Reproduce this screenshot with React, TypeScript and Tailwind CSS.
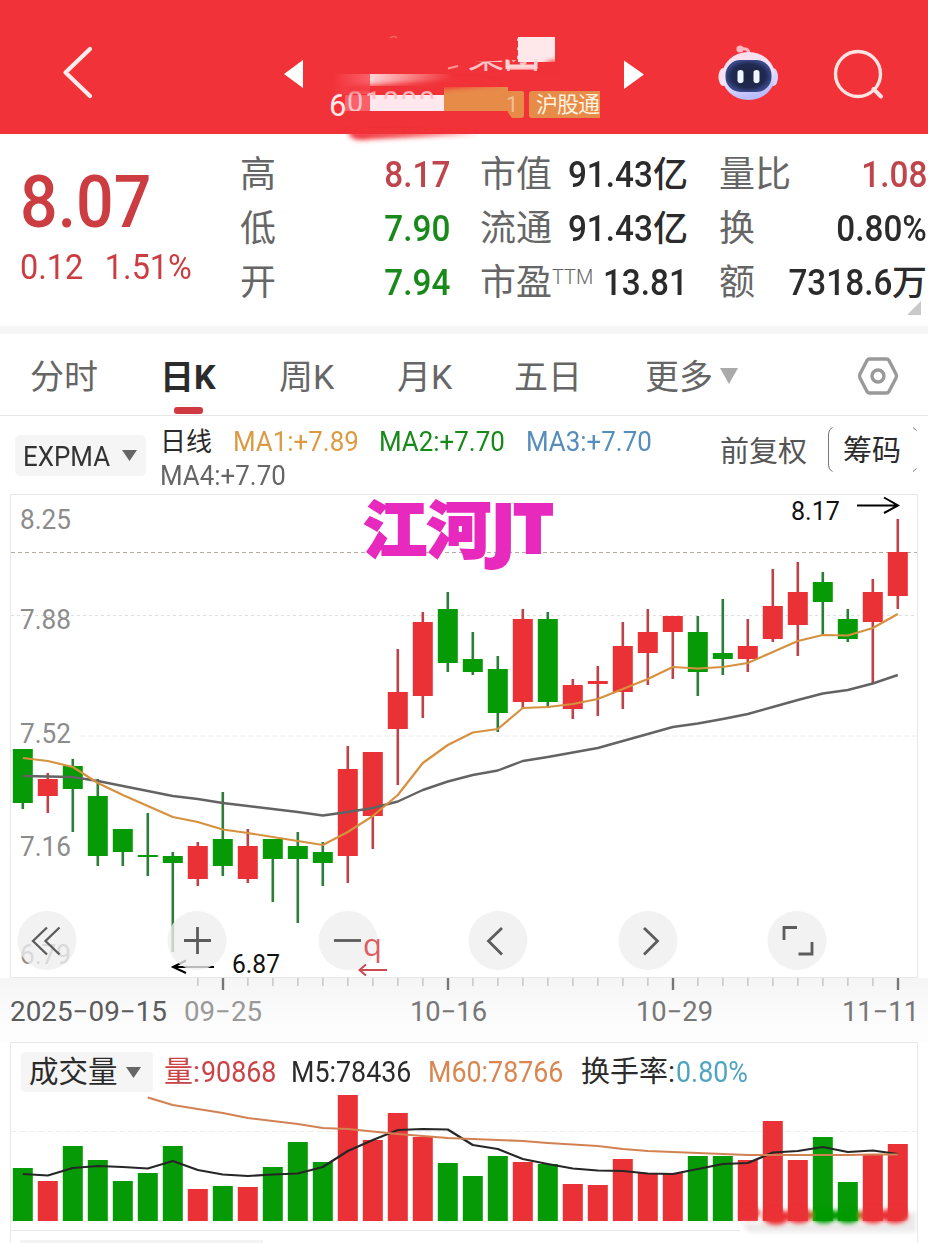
import React from "react";

type Candle = [up: 0 | 1, top: number, bottom: number, high: number, low: number];

const candles: Candle[] = [
  [0, 749, 803, 749, 809], [1, 779, 796, 773, 813], [0, 766, 789, 759, 832], [0, 796, 856, 779, 866],
  [0, 829, 852, 829, 866], [0, 855, 857, 813, 876], [0, 856, 863, 852, 952], [1, 846, 879, 842, 886],
  [0, 839, 866, 792, 876], [1, 846, 879, 829, 883], [0, 839, 859, 839, 902], [0, 846, 859, 832, 923],
  [0, 852, 863, 842, 886], [1, 769, 856, 746, 883], [1, 752, 816, 752, 849], [1, 692, 729, 649, 785],
  [1, 622, 696, 612, 718], [0, 609, 663, 592, 672], [0, 659, 672, 632, 675], [0, 669, 713, 656, 732],
  [1, 619, 702, 609, 708], [0, 619, 702, 612, 708], [1, 685, 709, 679, 719], [1, 681, 684, 666, 716],
  [1, 646, 692, 622, 709], [1, 632, 653, 609, 685], [1, 616, 632, 616, 679], [0, 632, 672, 616, 696],
  [0, 653, 659, 599, 675], [1, 646, 659, 619, 672], [1, 606, 639, 569, 642], [1, 592, 625, 562, 656],
  [0, 582, 602, 572, 635], [0, 619, 639, 609, 642], [1, 592, 622, 579, 684], [1, 552, 596, 519, 609],
];

const fastLine = [
  758, 761, 767, 783, 795, 806, 817, 822, 829.5, 833, 837, 841, 845, 832, 816, 795, 763, 745, 732.5, 729, 708, 707,
  704, 699, 689, 679, 667, 668.5, 667, 663, 652, 641, 635, 635.5, 628, 614,
];
const slowLine = [
  776, 776.5, 777, 781, 786, 791, 796, 799, 803, 806, 809, 812, 815.5, 812, 808, 801.5, 790, 781.5, 775, 770.5, 761,
  757, 752.5, 748, 741, 734, 727, 723.5, 719, 714, 707, 700, 693.5, 690, 683.5, 675,
];
const volumeTops = [
  1168, 1181, 1146, 1160, 1181, 1173, 1146, 1189, 1186, 1187, 1167, 1142, 1162, 1095, 1140, 1113, 1137, 1163, 1176,
  1156, 1162, 1164, 1184, 1185, 1159, 1173, 1173, 1156, 1156, 1160, 1121, 1160, 1137, 1182, 1155, 1144,
];
const m5 = [
  1174, 1175.5, 1168, 1166, 1167, 1168.5, 1161, 1170, 1174.5, 1176, 1174.5, 1173.5, 1167, 1151, 1140, 1130, 1129,
  1129.5, 1145, 1149, 1159, 1164, 1168.5, 1170.5, 1171, 1173.5, 1174, 1169, 1164, 1163, 1152.5, 1151, 1147, 1152,
  1150.5, 1154,
];
const m60 = [
  1097.5, 1105, 1109, 1113, 1118, 1121, 1124, 1128, 1129, 1131.5, 1134, 1136, 1138, 1139, 1140, 1141, 1143, 1144.5,
  1146, 1149, 1151, 1152, 1153, 1154, 1155, 1155, 1155, 1155, 1155, 1154.5, 1154.5,
];

const RED = "#ea3135";
const GREEN = "#069a06";
const cx = (i: number) => 22.8 + i * 25;
const points = (ys: number[], from = 0) => ys.map((y, i) => `${cx(i + from)},${y}`).join(" ");

function Header() {
  return (
    <header className="h-[134px] w-full bg-[#f13238]">
      <svg width="928" height="150" viewBox="0 0 928 150" className="relative block">
        <defs>
          <filter id="soft" x="-20%" y="-60%" width="140%" height="220%">
            <feGaussianBlur stdDeviation="2.5" />
          </filter>
          <linearGradient id="fadeR" x1="0" x2="1" y1="0" y2="0">
            <stop offset="0" stopColor="#ffd5d6" />
            <stop offset="1" stopColor="#f13238" />
          </linearGradient>
          <linearGradient id="fadeL" x1="0" x2="1" y1="0" y2="0">
            <stop offset="0" stopColor="#f13238" />
            <stop offset="1" stopColor="#fa6069" />
          </linearGradient>
          <linearGradient id="shell" x1="0" x2="0.3" y1="0" y2="1">
            <stop offset="0" stopColor="#ffdce6" />
            <stop offset="0.6" stopColor="#ece5ff" />
            <stop offset="1" stopColor="#b9bcff" />
          </linearGradient>
          <radialGradient id="visor">
            <stop offset="0" stopColor="#1d2442" />
            <stop offset="0.75" stopColor="#202a50" />
            <stop offset="1" stopColor="#3a4787" />
          </radialGradient>
        </defs>
        <path d="M348 131 C350 140 358 141 372 139 L480 133 Z" fill="#f13238" filter="url(#soft)" />
        <path d="M90 49 L65.500 72.500 L90 96" fill="none" stroke="#ffeceb" strokeWidth="4.200" strokeLinecap="round" strokeLinejoin="round" />
        <path d="M303 60 V88 L284 74 Z M624 60.500 V89 L644 74.500 Z" fill="#fff" />
        <path d="M390 38 q4 -3 7 0" fill="none" stroke="#f8676c" strokeWidth="1.500" />
        <text x="468" y="68" fontSize="36" fill="#ffc4c6" className="font-['Noto_Sans_CJK_SC',sans-serif]">集团</text>
        <path d="M448 68.500 l10 -2.500" stroke="#f99699" strokeWidth="2" />
        <path d="M455 28 H517 V60 L455 63 Z" fill="#f13238" />
        <rect x="518" y="37" width="37" height="25" fill="#ffe8ea" />
        <path d="M507 59.500 V69 M507 66 H536 M536 59 V69" fill="none" stroke="#ffd6d8" strokeWidth="3" />
        <path d="M541 67 Q548 60 558 60 V69 H541Z" fill="#f13238" filter="url(#soft)" />
        <rect x="333" y="74" width="37" height="20" fill="url(#fadeL)" />
        <rect x="370" y="74" width="82" height="12" fill="url(#fadeR)" />
        <rect x="345" y="95" width="25" height="16" fill="#fa6069" />
        <rect x="370" y="95" width="74" height="16" fill="#ffe8ed" />
        <text x="329" y="116" fontSize="31" fill="#ffe8e8" className="font-[Roboto,sans-serif]">6</text>
        <text x="347" y="112" fontSize="29" fill="#fcc4c8" textLength="88" className="font-[Roboto,sans-serif]">01000</text>
        <rect x="372" y="99" width="72" height="12" fill="#ffe8ed" />
        <rect x="444" y="87" width="64" height="24" fill="#e78b49" />
        <path d="M500 91 H522 Q524 91 524 93 V115 Q524 118 521 118 H512 L506 110 Z" fill="#e78b49" />
        <text x="506" y="112" fontSize="22" fill="#f4bd92" className="font-[Roboto,sans-serif]">1</text>
        <path d="M340 87 Q365 86 445 80 Q490 78 500 84 Q460 88 442 89 Q400 89 350 92 Z" fill="#f13238" filter="url(#soft)" />
        <rect x="346" y="111" width="162" height="13" fill="#f13238" />
        <path d="M529 94 Q529 91 532 91 H600 V118 H532 Q529 118 529 115 Z" fill="#e78b49" />
        <text x="536" y="112" fontSize="22" textLength="64" fill="#fff2df" className="font-['Noto_Sans_CJK_SC',sans-serif]">沪股通</text>
        <circle cx="740" cy="49" r="3.600" fill="#ffb9c3" />
        <path d="M740 49 Q750 47 749 56" fill="none" stroke="#ffb9c3" strokeWidth="3" />
        <ellipse cx="723" cy="77" rx="4.500" ry="9" fill="#ffe2ee" />
        <ellipse cx="773.500" cy="77" rx="4.500" ry="9" fill="#d8d3ff" />
        <ellipse cx="748.500" cy="76" rx="26.500" ry="24" fill="url(#shell)" />
        <rect x="725.500" y="60" width="46" height="32" rx="15" fill="url(#visor)" />
        <rect x="737.500" y="70" width="6" height="13" rx="2.800" fill="#f0f6ff" />
        <rect x="753.500" y="70" width="6" height="13" rx="2.800" fill="#f0f6ff" />
        <circle cx="858" cy="74" r="22.500" fill="none" stroke="#ffe4e2" strokeWidth="3.400" />
        <path d="M873.500 89 L881 96.500" stroke="#ffe4e2" strokeWidth="4" strokeLinecap="round" />
      </svg>
    </header>
  );
}

function Num({ children, right = false }: { children: string; right?: boolean }) {
  return <span className={right ? "inline-block origin-right scale-x-[0.925]" : "inline-block origin-left scale-x-[0.925]"}>{children}</span>;
}

interface StatProps {
  label: React.ReactNode;
  value: string;
  unit?: string;
  tone?: string;
}

function Stat({ label, value, unit, tone = "text-[#2b2b2b]" }: StatProps) {
  return (
    <div className="flex h-[54px] items-center justify-between whitespace-nowrap">
      <span className="text-[36px] text-[#666]">{label}</span>
      <span className={"text-[36px] font-medium " + tone}>
        <Num right>{value}</Num>
        {unit && <span className="text-[35px]">{unit}</span>}
      </span>
    </div>
  );
}

function Quote() {
  return (
    <section className="flex h-[192px] pt-[14px] leading-none">
      <div className="w-[240px] pl-[20px] pt-[18px] text-[#cb3d41]">
        <div className="origin-left scale-x-[0.92] text-[72px] font-medium leading-[74px]">8.07</div>
        <div className="flex origin-left scale-x-[0.94] gap-[23px] pt-[3px] text-[34.500px] leading-[48px]">
          <span>0.12</span>
          <span>1.51%</span>
        </div>
      </div>
      <div className="w-[210px]">
        <Stat label="高" value="8.17" tone="text-[#c0444b]" />
        <Stat label="低" value="7.90" tone="text-[#18891a]" />
        <Stat label="开" value="7.94" tone="text-[#18891a]" />
      </div>
      <div className="ml-[30px] w-[208px]">
        <Stat label="市值" value="91.43" unit="亿" />
        <Stat label="流通" value="91.43" unit="亿" />
        <Stat label={<>市盈<span className="relative top-[-11px] text-[20px] font-light">TTM</span></>} value="13.81" />
      </div>
      <div className="relative ml-[31px] w-[208px]">
        <Stat label="量比" value="1.08" tone="text-[#c0444b]" />
        <Stat label="换" value="0.80%" />
        <Stat label="额" value="7318.6" unit="万" />
        <svg width="14" height="14" className="absolute bottom-[11px] right-[6px]">
          <path d="M14 0 V14 H0 Z" fill="#c9c9c9" />
        </svg>
      </div>
    </section>
  );
}

function Tabs() {
  const tab = "block whitespace-nowrap";
  return (
    <nav className="flex h-[82px] items-center border-b border-[#e6e6e6] pt-[4px] text-[34px] leading-none text-[#666]">
      <span className={tab + " w-[130px] pl-[30px]"}>分时</span>
      <div className="relative w-[149px] pl-[30px] font-bold text-[#2b2b2b]">
        日K
        <i className="absolute bottom-[-20px] left-[44px] h-[7px] w-[29px] rounded-[3px] bg-[#cf3a42]" />
      </div>
      <span className={tab + " w-[118px]"}>周K</span>
      <span className={tab + " w-[117px]"}>月K</span>
      <span className={tab + " w-[131px]"}>五日</span>
      <span className={tab + " w-[75px]"}>更多</span>
      <svg width="18" height="16" className="mb-[1px]"><path d="M0 0 H18 L9 16 Z" fill="#aaa" /></svg>
      <svg width="42" height="40" viewBox="0 0 42 40" className="mb-[1px] ml-[119px]" fill="none" stroke="#999" strokeWidth="3.400">
        <path d="M12.500 3 H29.500 Q31 3 32 4.500 L39 18 Q40 20 39 22 L32 35.500 Q31 37 29.500 37 H12.500 Q11 37 10 35.500 L3 22 Q2 20 3 18 L10 4.500 Q11 3 12.500 3 Z" />
        <circle cx="21" cy="20" r="6" />
      </svg>
    </nav>
  );
}

function Indicators() {
  return (
    <section className="flex h-[78px] leading-none">
      <div className="ml-[15px] mt-[19px] flex h-[41px] w-[131px] items-center rounded-[5px] bg-[#f5f5f5] pl-[8px] pt-[2px] text-[28px] text-[#333]">
        <span className="w-[99px]"><Num>EXPMA</Num></span>
        <svg width="15" height="11" className="mb-[3px]"><path d="M0 0 H15 L7.500 11 Z" fill="#666" /></svg>
      </div>
      <div className="ml-[14px] flex w-[558px] flex-col pt-[8px] text-[28px]">
        <div className="flex h-[35px] items-center whitespace-nowrap">
          <span className="w-[73px] text-[26px] text-[#2b2b2b]">日线</span>
          <span className="w-[146px] text-[#dc9a45]"><Num>MA1:+7.89</Num></span>
          <span className="w-[147px] text-[#18891a]"><Num>MA2:+7.70</Num></span>
          <span className="text-[#558dbd]"><Num>MA3:+7.70</Num></span>
        </div>
        <span className="h-[34px] leading-[34px] text-[#666]"><Num>MA4:+7.70</Num></span>
      </div>
      <span className="ml-[2px] mt-[22px] w-[108px] text-[29px] text-[#555]">前复权</span>
      <span className="relative mt-[11px] flex h-[45px] w-[88px] items-center justify-center pt-[4px] text-[29px] text-[#2b2b2b]">
        筹码
        <svg width="90" height="45" className="absolute left-0 top-0" fill="none" stroke="#777">
          <path d="M4.500 0.500 Q0.500 2 0.500 7 V38 Q0.500 43 4.500 44.500 M85 0.500 L88.500 3.500 M85 44.500 L88.500 41.500" />
        </svg>
      </span>
    </section>
  );
}

interface LabelProps {
  x: number;
  y: number;
  w: number;
  size?: number;
  fill?: string;
  children: string;
}

function Label({ x, y, w, size = 27, fill = "#8c8c8c", children }: LabelProps) {
  return (
    <text x={x} y={y} fontSize={size} fill={fill} textLength={w} lengthAdjust="spacingAndGlyphs" className="font-[Roboto,sans-serif]">
      {children}
    </text>
  );
}

function PriceChart() {
  return (
    <svg width="928" height="548" viewBox="0 494 928 548" className="block shrink-0 overflow-visible">
      <defs>
        <linearGradient id="axis" x1="0" x2="0" y1="0" y2="1">
          <stop offset="0" stopColor="#f5f5f5" />
          <stop offset="0.8" stopColor="#fdfdfd" />
        </linearGradient>
      </defs>
      <rect x="0" y="978" width="928" height="64" fill="url(#axis)" />
      <rect x="10.500" y="494.500" width="907" height="483" fill="#fff" stroke="#e8e8e8" />
      <path d="M11 552.500 H917" stroke="#b5ae9f" strokeDasharray="4 3" />
      <path d="M11 615.500 H917" stroke="#dedede" strokeDasharray="3 3" />
      <path d="M80 736 H917" stroke="#ececec" strokeDasharray="6 2" />
      <Label x={20} y={528.5} w={51}>8.25</Label>
      <Label x={20} y={628.5} w={51}>7.88</Label>
      <Label x={20} y={742.5} w={51}>7.52</Label>
      <Label x={20} y={856} w={51}>7.16</Label>
      <Label x={20} y={963.5} w={51}>6.79</Label>
      {candles.map(([up, top, bottom, high, low], i) => (
        <g key={i} fill={up ? RED : GREEN}>
          <rect x={cx(i) - 1.3} y={high} width="2.600" height={low - high} fill={up ? "#bd4348" : "#2c7d38"} />
          <rect x={cx(i) - 10} y={top} width="20" height={bottom - top} />
        </g>
      ))}
      <polyline points={points(slowLine)} fill="none" stroke="#636363" strokeWidth="2.400" strokeLinejoin="round" />
      <polyline points={points(fastLine)} fill="none" stroke="#d6913f" strokeWidth="2.200" strokeLinejoin="round" />
      <g fill="#e829bd" stroke="#e829bd" strokeWidth="1.800" className="font-black">
        <text x="363" y="553" fontSize="62" textLength="128" lengthAdjust="spacingAndGlyphs" className="font-['Noto_Sans_CJK_SC',sans-serif]">江河</text>
        <text x="491" y="553" fontSize="69" className="font-['Open_Sans',sans-serif]">J</text>
        <text x="513" y="553" fontSize="69" className="font-['Open_Sans',sans-serif]">T</text>
      </g>
      <Label x={791} y={519.5} w={49} size={25} fill="#111">8.17</Label>
      <path d="M857 505.500 H898 M884 497.500 L898 505.500 L884 513" fill="none" stroke="#000" strokeWidth="2" />
      <path d="M214 967 H173 M186 960.500 L173 967 L186 973" fill="none" stroke="#000" strokeWidth="2" />
      <g fill="#eee" fillOpacity="0.78">
        {[47, 197, 348, 498, 648, 797].map((x) => <circle key={x} cx={x} cy="940.500" r="29.500" />)}
      </g>
      <g fill="none" stroke="#5c5c5c" strokeWidth="2.800">
        <path d="M47 927.500 L33 941 L47 954.500 M59.500 927.500 L45.500 941 L59.500 954.500" strokeWidth="2.300" />
        <path d="M184 940.500 H211 M197.500 927 V954" />
        <path d="M334 940.500 H361" />
        <path d="M502 928 L488.500 941 L502 954.500 M644 928 L657.500 941 L644 954.500" />
        <path d="M784 940 V927.500 H797 M798.500 954 H812 V942" />
      </g>
      <Label x={232} y={973} w={48} size={25} fill="#111">6.87</Label>
      <text x="363" y="956" fontSize="31" fill="#dc5c62" className="font-['Open_Sans',sans-serif]">q</text>
      <path d="M387 970 H360 M366 964.500 L359.500 970 L366 975.500" fill="none" stroke="#c74a51" strokeWidth="2" />
      {Array.from({ length: 29 }, (_, n) => {
        const i = n + 7;
        const major = (i - 8) % 9 === 0;
        return <rect key={i} x={cx(i) - (major ? 1 : 0.5)} y="978" width={major ? 2.4 : 1.2} height={major ? 12 : 8} fill={major ? "#777" : "#bbb"} />;
      })}
      <Label x={10} y={1021} w={157} fill="#5c5c5c">2025−09−15</Label>
      <Label x={184} y={1021} w={78} fill="#999">09−25</Label>
      <Label x={410} y={1021} w={77} fill="#777">10−16</Label>
      <Label x={636} y={1021} w={77} fill="#777">10−29</Label>
      <Label x={842} y={1021} w={77} fill="#777">11−11</Label>
    </svg>
  );
}

function Volume() {
  return (
    <section className="mx-[10px] flex h-[201px] w-[908px] flex-col border-x border-t border-[#e8e8e8] leading-none">
      <div className="flex h-[52px] items-center whitespace-nowrap pt-[6px] text-[29px] text-[#2b2b2b]">
        <div className="ml-[10px] mr-[11px] flex h-[40px] w-[132px] items-center rounded bg-[#f5f5f5] pl-[8px] pt-[2px]">
          <span className="w-[97px] text-[29.500px]">成交量</span>
          <svg width="15" height="11" className="mb-[2px]"><path d="M0 0 H15 L7.500 11 Z" fill="#666" /></svg>
        </div>
        <span className="w-[37px] text-[#cb4347]">量:</span>
        <span className="w-[90px] text-[#cb4347]"><Num>90868</Num></span>
        <span className="w-[137px]"><Num>M5:78436</Num></span>
        <span className="w-[153px] text-[#d98650]"><Num>M60:78766</Num></span>
        <span className="w-[95px]">换手率:</span>
        <span className="text-[#4ea5bf]"><Num>0.80%</Num></span>
      </div>
      <svg width="906" height="148" viewBox="11 1095 906 148" className="block shrink-0">
        <defs>
          <filter id="smear" x="-10%" y="-80%" width="120%" height="260%">
            <feGaussianBlur stdDeviation="2" />
          </filter>
        </defs>
        <path d="M11 1131.500 H917" stroke="#eee" strokeDasharray="6 3" />
        {volumeTops.map((y, i) => (
          <rect key={i} x={cx(i) - 10} y={y} width="20" height={1221 - y} fill={candles[i][0] ? RED : GREEN} />
        ))}
        <polyline points={points(m5)} fill="none" stroke="#262626" strokeWidth="2.200" strokeLinejoin="round" />
        <polyline points={points(m60, 5)} fill="none" stroke="#d28252" strokeWidth="2.200" strokeLinejoin="round" />
        <path d="M11 1230.500 H740" stroke="#e8e8e8" />
        <rect x="20" y="1240" width="243" height="4" fill="#f3f3f3" />
        <path d="M742 1223 H900 L916 1210 V1232 H748 Z" fill="#ece9e9" filter="url(#smear)" />
        <g filter="url(#smear)">
          {[750, 776, 799, 824, 848, 873, 895].map((x, n) => (
            <ellipse key={x} cx={x} cy={n === 0 ? 1213 : n === 1 ? 1217 : 1215.5} rx={n === 0 ? 10 : 13} ry={n === 0 ? 6 : 8} fill={n === 3 || n === 4 ? GREEN : RED} />
          ))}
        </g>
      </svg>
    </section>
  );
}

export default function App() {
  return (
    <main className="flex h-[1243px] w-[928px] flex-col overflow-hidden bg-white font-[Roboto,'Noto_Sans_CJK_SC',sans-serif]">
      <Header />
      <Quote />
      <div className="h-[8px] shrink-0 bg-[#f6f6f6]" />
      <Tabs />
      <Indicators />
      <PriceChart />
      <Volume />
    </main>
  );
}
